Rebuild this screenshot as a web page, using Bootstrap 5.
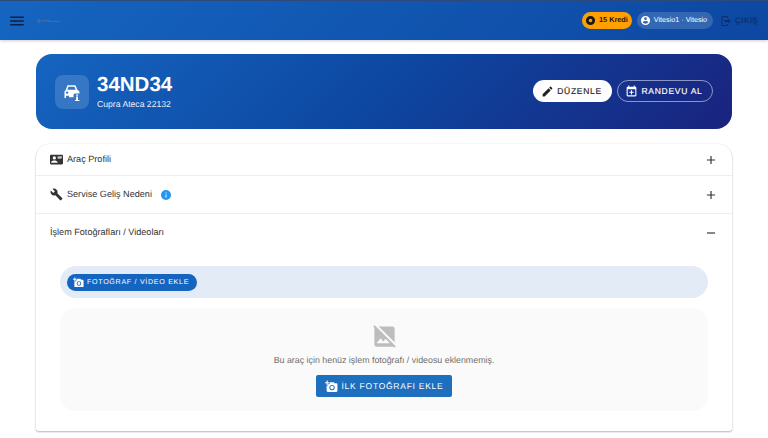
<!DOCTYPE html>
<html lang="tr">
<head>
<meta charset="utf-8">
<title>34ND34</title>
<link href="https://cdn.jsdelivr.net/npm/bootstrap@5.3.0/dist/css/bootstrap.min.css" rel="stylesheet">
<style>
html,body{height:438px;overflow:hidden;background:#fff}
body{font-family:"Liberation Sans",Arial,sans-serif;color:#212121;text-rendering:geometricPrecision}
svg{fill:currentColor;display:block;flex:none}
.topbar{height:40px;background:linear-gradient(135deg,#1565c0,#0d47a1);border-top:1px solid #2d4a78;box-shadow:0 1px 3px rgba(0,0,0,.2);padding:0 10px 0 8px}
.menu-btn{color:#0f1f45;width:18px}
.logo-mark{width:24px;height:6px;margin-left:10px;color:#3b6bb0}
.kredi{height:17px;background:#ffa000;color:#1a1a1a;font-size:7.3px;font-weight:700;border-radius:9px;padding:0 4px 0 3px;gap:3px;margin-right:5px}
.user-pill{height:17px;background:rgba(255,255,255,.16);color:#fff;font-size:7.2px;border-radius:9px;padding:0 6px 0 3px;gap:3px;margin-right:7px}
.exit{color:#0a2f6e;font-size:8px;letter-spacing:.4px;gap:3px;-webkit-text-stroke:.2px currentColor}
.page-wrap{padding:14px 36px 0}
.hero{height:75px;border-radius:16px;background:linear-gradient(135deg,#1565c0 0%,#0d47a1 50%,#1a237e 100%);padding:0 19px;color:#fff}
.hero-icon{width:34px;height:34px;border-radius:8px;background:rgba(255,255,255,.15);margin-right:8px}
.plate{font-size:20.5px;font-weight:700;line-height:22px}
.plate-sub{font-size:8.65px;line-height:12px;margin-top:2px;opacity:.9}
.pill-btn{height:22px;border-radius:11px;font-size:8.5px;letter-spacing:.72px;gap:3px;padding:0 9.5px 0 7px;border:1px solid transparent;-webkit-text-stroke:.15px currentColor;margin-bottom:1px}
.pill-white{background:#fff;color:#212121;margin-right:5px}
.pill-line{color:#fff;border-color:rgba(255,255,255,.5)}
.pane-list{margin-top:15px;border-radius:14px 14px 3px 3px;box-shadow:0 1px 2px rgba(0,0,0,.28),0 0 2px rgba(0,0,0,.08);background:#fff}
.pane-head{font-size:9.1px;padding:0 14px 0 14px;border-bottom:1px solid #eee;gap:4px;color:#333}
.h-a{height:32px}.h-b{height:38px}.h-c{height:37px;border-bottom:0}
.pane-body{padding:15px 24px 20px}
.add-bar{height:32px;border-radius:16px;background:#e3ebf6;padding:0 7px}
.add-btn{height:17px;background:#1565c0;color:#fff;border-radius:9px;font-size:7.1px;letter-spacing:.7px;padding:0 8px 0 6px;gap:3px}
.empty{margin-top:10px;height:103px;border-radius:16px;background:#fafafa;padding-top:15px}
.empty-text{font-size:8.85px;color:#707070;margin:4px 0 8px}
.first-btn{height:22px;width:136px;background:#1e6fbe;color:#fff;border-radius:2px;font-size:8.5px;letter-spacing:.74px;gap:4px}
</style>
</head>
<body>
<nav class="topbar d-flex align-items-center">
  <div class="menu-btn"><svg width="18" height="18" viewBox="0 0 24 24"><path d="M3,6H21V8H3V6M3,11H21V13H3V11M3,16H21V18H3V16Z"/></svg></div>
  <div class="logo-mark"><svg width="24" height="6" viewBox="0 0 24 6"><circle cx="3" cy="3" r="2"/><rect x="6" y="2" width="8" height="1.5"/><rect x="12" y="3" width="12" height="1"/></svg></div>
  <div class="ms-auto d-flex align-items-center">
    <div class="kredi d-flex align-items-center"><svg width="11" height="11" viewBox="0 0 24 24"><path fill-rule="evenodd" d="M12,2a10,10 0 1,0 0,20a10,10 0 1,0 0,-20M12,8a4,4 0 1,1 0,8a4,4 0 1,1 0,-8Z"/></svg>15 Kredi</div>
    <div class="user-pill d-flex align-items-center"><svg width="11" height="11" viewBox="0 0 24 24"><path d="M12,19.2C9.5,19.2 7.29,17.92 6,16C6.03,14 10,12.9 12,12.9C14,12.9 17.97,14 18,16C16.71,17.92 14.5,19.2 12,19.2M12,5A3,3 0 0,1 15,8A3,3 0 0,1 12,11A3,3 0 0,1 9,8A3,3 0 0,1 12,5M12,2A10,10 0 0,0 2,12A10,10 0 0,0 12,22A10,10 0 0,0 22,12A10,10 0 0,0 12,2Z"/></svg>Vitesio1 · Vitesio</div>
    <div class="exit d-flex align-items-center"><svg width="12" height="12" viewBox="0 0 24 24"><path d="M16,17V14H9V10H16V7L21,12L16,17M14,2A2,2 0 0,1 16,4V6H14V4H5V20H14V18H16V20A2,2 0 0,1 14,22H5A2,2 0 0,1 3,20V4A2,2 0 0,1 5,2H14Z"/></svg>ÇIKIŞ</div>
  </div>
</nav>
<main class="page-wrap">
  <section class="hero d-flex align-items-center">
    <div class="hero-icon d-flex align-items-center justify-content-center"><svg width="18" height="18" viewBox="0 0 24 24"><path fill-rule="evenodd" d="M6,3H16.5L19.5,9.5C21,10 22,11 22,12.5V14H16.5C15,14 14,15 14,16.5V19H8V17H4V20H2V12C2,10.8 2.6,10 3.5,9.5ZM7.3,5L5.8,9H17L15.3,5ZM5.5,11.2A1.6,1.6 0 1,0 5.5,14.4A1.6,1.6 0 1,0 5.5,11.2ZM17.5,15.2H20V17H17.5ZM17.5,18H20V22.5H22V24H16V22.5H17.5Z"/></svg></div>
    <div>
      <div class="plate">34ND34</div>
      <div class="plate-sub">Cupra Ateca 22132</div>
    </div>
    <div class="ms-auto d-flex align-items-center">
      <div class="pill-btn pill-white d-flex align-items-center"><svg width="13" height="13" viewBox="0 0 24 24"><path d="M20.71,7.04C21.1,6.65 21.1,6 20.71,5.63L18.37,3.29C18,2.9 17.35,2.9 16.96,3.29L15.12,5.12L18.87,8.87M3,17.25V21H6.75L17.81,9.93L14.06,6.18L3,17.25Z"/></svg>DÜZENLE</div>
      <div class="pill-btn pill-line d-flex align-items-center"><svg width="13" height="13" viewBox="0 0 24 24"><path d="M19 19V8H5V19H19M16 1H18V3H19C20.11 3 21 3.9 21 5V19C21 20.11 20.11 21 19 21H5C3.89 21 3 20.1 3 19V5C3 3.89 3.9 3 5 3H6V1H8V3H16V1M11 9.5H13V12.5H16V14.5H13V17.5H11V14.5H8V12.5H11V9.5Z"/></svg>RANDEVU AL</div>
    </div>
  </section>
  <section class="pane-list">
    <div class="pane-head h-a d-flex align-items-center"><svg width="13" height="13" viewBox="0 0 24 24"><path d="M2,3H22C23.05,3 24,3.95 24,5V19C24,20.05 23.05,21 22,21H2C0.95,21 0,20.05 0,19V5C0,3.95 0.95,3 2,3M14,6V7H22V6H14M14,8V9H21.5L22,9V8H14M14,10V11H21V10H14M8,13.91C6,13.91 2,15 2,17V18H14V17C14,15 10,13.91 8,13.91M8,6A3,3 0 0,0 5,9A3,3 0 0,0 8,12A3,3 0 0,0 11,9A3,3 0 0,0 8,6Z"/></svg>Araç Profili<svg class="ms-auto" width="14" height="14" viewBox="0 0 24 24"><path d="M19,13H13V19H11V13H5V11H11V5H13V11H19V13Z"/></svg></div>
    <div class="pane-head h-b d-flex align-items-center"><svg width="13" height="13" viewBox="0 0 24 24"><path d="M22.7,19L13.6,9.9C14.5,7.6 14,4.9 12.1,3C10.1,1 7.1,0.6 4.7,1.7L9,6L6,9L1.6,4.7C0.4,7.1 0.9,10.1 2.9,12.1C4.8,14 7.5,14.5 9.8,13.6L18.9,22.7C19.3,23.1 19.9,23.1 20.3,22.7L22.6,20.4C23.1,20 23.1,19.3 22.7,19Z"/></svg>Servise Geliş Nedeni<svg class="ms-1" style="color:#2196f3" width="12" height="12" viewBox="0 0 24 24"><path d="M13,9H11V7H13M13,17H11V11H13M12,2A10,10 0 0,0 2,12A10,10 0 0,0 12,22A10,10 0 0,0 22,12A10,10 0 0,0 12,2Z"/></svg><svg class="ms-auto" width="14" height="14" viewBox="0 0 24 24"><path d="M19,13H13V19H11V13H5V11H11V5H13V11H19V13Z"/></svg></div>
    <div class="pane-head h-c d-flex align-items-center">İşlem Fotoğrafları / Videoları<svg class="ms-auto" width="14" height="14" viewBox="0 0 24 24"><path d="M19,13H5V11H19V13Z"/></svg></div>
    <div class="pane-body">
      <div class="add-bar d-flex align-items-center">
        <div class="add-btn d-flex align-items-center"><svg width="11" height="11" viewBox="0 0 24 24"><path fill-rule="evenodd" d="M3,4V1H5V4H8V6H5V9H3V6H0V4M6,10V7H9V4H16L17.83,6H21A2,2 0 0,1 23,8V20A2,2 0 0,1 21,22H5A2,2 0 0,1 3,20V10M13,19A5,5 0 0,0 18,14A5,5 0 0,0 13,9A5,5 0 0,0 8,14A5,5 0 0,0 13,19M9.8,14C9.8,15.77 11.23,17.2 13,17.2C14.77,17.2 16.2,15.77 16.2,14C16.2,12.23 14.77,10.8 13,10.8C11.23,10.8 9.8,12.23 9.8,14Z"/></svg>FOTOĞRAF / VİDEO EKLE</div>
      </div>
      <div class="empty d-flex flex-column align-items-center">
        <svg style="color:#bdbdbd" width="27" height="27" viewBox="0 0 24 24"><path d="M21 17.2L6.8 3H19C20.1 3 21 3.9 21 5V17.2M20.7 22L19.7 21H5C3.9 21 3 20.1 3 19V4.3L2 3.3L3.3 2L22 20.7L20.7 22M16.8 18L12.9 14.1L11 16.5L8.5 13.5L5 18H16.8Z"/></svg>
        <div class="empty-text">Bu araç için henüz işlem fotoğrafı / videosu eklenmemiş.</div>
        <div class="first-btn d-flex align-items-center justify-content-center"><svg width="13" height="13" viewBox="0 0 24 24"><path fill-rule="evenodd" d="M3,4V1H5V4H8V6H5V9H3V6H0V4M6,10V7H9V4H16L17.83,6H21A2,2 0 0,1 23,8V20A2,2 0 0,1 21,22H5A2,2 0 0,1 3,20V10M13,19A5,5 0 0,0 18,14A5,5 0 0,0 13,9A5,5 0 0,0 8,14A5,5 0 0,0 13,19M9.8,14C9.8,15.77 11.23,17.2 13,17.2C14.77,17.2 16.2,15.77 16.2,14C16.2,12.23 14.77,10.8 13,10.8C11.23,10.8 9.8,12.23 9.8,14Z"/></svg>İLK FOTOĞRAFI EKLE</div>
      </div>
    </div>
  </section>
</main>
<script src="https://cdn.jsdelivr.net/npm/bootstrap@5.3.0/dist/js/bootstrap.bundle.min.js"></script>
</body>
</html>
